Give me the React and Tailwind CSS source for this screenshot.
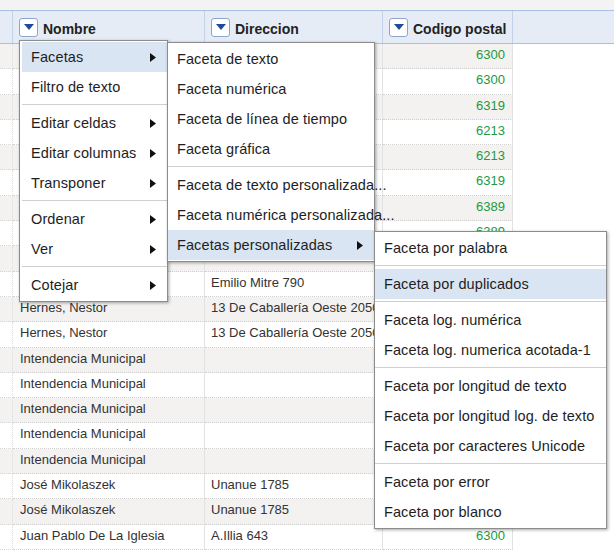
import React from 'react';

// hidden cells (under the open menus) are left blank
const rows = [
  { nombre: '', dir: '', cp: '6300' },
  { nombre: '', dir: '', cp: '6300' },
  { nombre: '', dir: '', cp: '6319' },
  { nombre: '', dir: '', cp: '6213' },
  { nombre: '', dir: '', cp: '6213' },
  { nombre: '', dir: '', cp: '6319' },
  { nombre: '', dir: '', cp: '6389' },
  { nombre: '', dir: '', cp: '6389' },
  { nombre: '', dir: '', cp: '' },
  { nombre: '', dir: 'Emilio Mitre 790', cp: '' },
  { nombre: 'Hernes, Nestor', dir: '13 De Caballería Oeste 2050', cp: '' },
  { nombre: 'Hernes, Nestor', dir: '13 De Caballería Oeste 2050', cp: '' },
  { nombre: 'Intendencia Municipal', dir: '', cp: '' },
  { nombre: 'Intendencia Municipal', dir: '', cp: '' },
  { nombre: 'Intendencia Municipal', dir: '', cp: '' },
  { nombre: 'Intendencia Municipal', dir: '', cp: '' },
  { nombre: 'Intendencia Municipal', dir: '', cp: '' },
  { nombre: 'José Mikolaszek', dir: 'Unanue 1785', cp: '' },
  { nombre: 'José Mikolaszek', dir: 'Unanue 1785', cp: '' },
  { nombre: 'Juan Pablo De La Iglesia', dir: 'A.Illia 643', cp: '6300' },
];

const menu1 = [
  { label: 'Facetas', sub: true, active: true },
  { label: 'Filtro de texto' },
  'sep',
  { label: 'Editar celdas', sub: true },
  { label: 'Editar columnas', sub: true },
  { label: 'Transponer', sub: true },
  'sep',
  { label: 'Ordenar', sub: true },
  { label: 'Ver', sub: true },
  'sep',
  { label: 'Cotejar', sub: true },
];

const menu2 = [
  { label: 'Faceta de texto' },
  { label: 'Faceta numérica' },
  { label: 'Faceta de línea de tiempo' },
  { label: 'Faceta gráfica' },
  'sep',
  { label: 'Faceta de texto personalizada...' },
  { label: 'Faceta numérica personalizada...' },
  { label: 'Facetas personalizadas', sub: true, active: true },
];

const menu3 = [
  { label: 'Faceta por palabra' },
  'sep',
  { label: 'Faceta por duplicados', active: true },
  'sep',
  { label: 'Faceta log. numérica' },
  { label: 'Faceta log. numerica acotada-1' },
  'sep',
  { label: 'Faceta por longitud de texto' },
  { label: 'Faceta por longitud log. de texto' },
  { label: 'Faceta por caracteres Unicode' },
  'sep',
  { label: 'Faceta por error' },
  { label: 'Faceta por blanco' },
];

const DropButton = () => (
  <span className="flex items-center justify-center w-[19px] h-[19px] bg-white border border-[#8ea6cf] rounded-[3px] shrink-0">
    <svg width="10" height="6" viewBox="0 0 10 6">
      <polygon points="0,0 10,0 5,6" fill="#1d4c9e" />
    </svg>
  </span>
);

const Arrow = () => (
  <svg width="6" height="9" viewBox="0 0 6 9" className="shrink-0">
    <polygon points="0,0 6,4.5 0,9" fill="#111" />
  </svg>
);

const Menu = ({ items, className, inset }) => (
  <div className={`absolute bg-white border border-[#8c8c8c] shadow-[1px_1px_3px_rgba(0,0,0,0.35)] py-[1px] ${className}`}>
    {items.map((item, i) =>
      item === 'sep' ? (
        <div key={i} className={`h-[6px] flex items-center ${inset ? 'pl-[2px]' : ''}`}>
          <div className="w-full h-[2px] border-t border-[#cfcfcf] border-b border-b-white" />
        </div>
      ) : (
        <div key={i} className={`h-[30px] flex ${inset ? 'pl-[2px]' : ''}`}>
          <div
            className={`flex-1 flex items-center justify-between whitespace-nowrap pl-[9px] pr-[11px] pt-[1px] ${
              item.active ? 'bg-[#d9e5f3]' : ''
            }`}
          >
            <span className="tracking-[0.1px]">{item.label}</span>
            {item.sub && <Arrow />}
          </div>
        </div>
      )
    )}
  </div>
);

export default function App() {
  return (
    <div
      className="relative w-[614px] h-[556px] overflow-hidden bg-white text-[#333]"
      style={{ fontFamily: '"Liberation Sans", Arial, sans-serif' }}
    >
      <div className="h-[10px] bg-[#f3f3f3]" />

      {/* header */}
      <div className="grid grid-cols-[13px_192px_178px_130px_1fr] h-[34px] bg-[#e6ecf6] border-t border-b border-[#a9bfe4] text-[14px] font-bold text-[#222]">
        <div className="border-r border-[#c3d1ea]" />
        <div className="flex items-center gap-[5px] pl-[6px] border-r border-[#c3d1ea]">
          <DropButton />
          <span className="mt-[5px]">Nombre</span>
        </div>
        <div className="flex items-center gap-[5px] pl-[6px] border-r border-[#c3d1ea]">
          <DropButton />
          <span className="mt-[5px]">Direccion</span>
        </div>
        <div className="flex items-center gap-[5px] pl-[6px] border-r border-[#c3d1ea]">
          <DropButton />
          <span className="mt-[5px]">Codigo postal</span>
        </div>
        <div />
      </div>

      {/* rows */}
      <div className="text-[13px]">
        {rows.map((r, i) => (
          <div
            key={i}
            className={`grid grid-cols-[13px_192px_178px_130px_1fr] h-[25.3px] leading-[15px] ${
              i % 2 === 0 ? 'bg-[#f3f2f0]' : 'bg-white'
            }`}
          >
            <div className="border-r border-[#dcdcdc] border-b border-b-[#d6d6d6] border-dotted" />
            <div className="pl-[7px] pt-[3px] overflow-hidden whitespace-nowrap border-r border-[#e2e2e2] border-b border-b-[#d0d0d0] [border-bottom-style:dotted]">
              {r.nombre}
            </div>
            <div className="pl-[6px] pt-[3px] overflow-hidden whitespace-nowrap border-r border-[#e2e2e2] border-b border-b-[#d0d0d0] [border-bottom-style:dotted]">
              {r.dir}
            </div>
            <div className="pr-[7px] pt-[3px] text-right text-[#22993f] border-r border-[#e2e2e2] border-b border-b-[#d0d0d0] [border-bottom-style:dotted]">
              {r.cp}
            </div>
            <div className="bg-white" />
          </div>
        ))}
      </div>

      {/* menus */}
      <div className="text-[14.5px] text-[#1e1e1e]">
        <Menu items={menu1} inset className="left-[19px] top-[40px] w-[149px]" />
        <Menu items={menu2} className="left-[167px] top-[42px] w-[208px]" />
        <Menu items={menu3} className="left-[374px] top-[231px] w-[233px]" />
      </div>
    </div>
  );
}
